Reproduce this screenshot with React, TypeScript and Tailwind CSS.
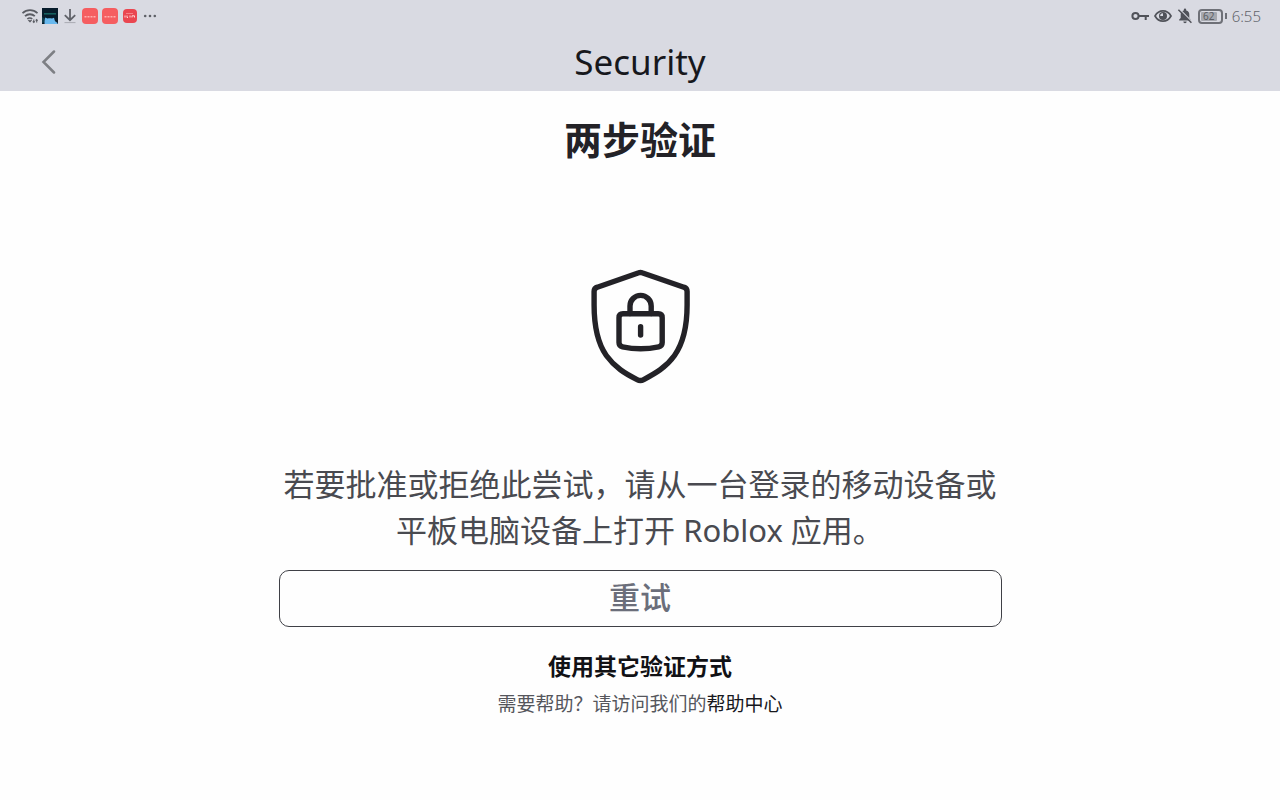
const fontStack = "font-['Noto_Sans','Noto_Sans_CJK_SC',sans-serif]";

function WifiIcon() {
  return (
    <svg className="h-4 w-4" viewBox="0 0 16 16" fill="none" stroke="#5a5c63" aria-hidden="true">
      <path d="M0.5 5.2C4.7 1.2 11.3 1.2 15.5 5.2" strokeWidth="1.8" />
      <path d="M3 8.2C5.8 5.6 10 5.6 12.8 8.2" strokeWidth="1.8" />
      <path d="M5.3 11C6.8 9.6 8.9 9.6 10.2 11" strokeWidth="1.6" />
      <path d="M6.3 12.4 8 14.2 9.6 12.4Z" fill="#5a5c63" strokeWidth="0.8" />
      <path d="M11.8 11.5v3M10.8 13.3l1 1.2 1-1.2M14.7 14.5v-3M13.7 12.7l1-1.2 1 1.2" strokeWidth="1.1" />
    </svg>
  );
}

function PictureIcon() {
  return (
    <svg className="h-4 w-4" viewBox="0 0 16 16" aria-hidden="true">
      <rect width="16" height="16" fill="#071c2b" />
      <path d="M2 5h12v1.6H2z" fill="#15605f" />
      <path d="M2.6 16C2.2 12.6 2.6 10.6 3.4 9.6L5.4 10.6C7 10 8.6 10 10 10.6L12 9.8C12.6 11.4 12.6 12.6 13.4 13.6L15.5 15V16Z" fill="#69b9ee" />
      <path d="M0 9 2.6 10.4 2 14.5 0 15Z" fill="#103d4b" />
    </svg>
  );
}

function DownloadIcon() {
  return (
    <svg className="h-4 w-4" viewBox="0 0 16 16" fill="none" stroke="#606269" aria-hidden="true">
      <path d="M8 1v11M2.8 7.2 8 12.2l5.2-5" strokeWidth="1.8" />
      <path d="M2.5 14.6h11" stroke="#a9abb2" strokeWidth="1" />
    </svg>
  );
}

function RedAppIcon({ small = false }: { small?: boolean }) {
  return (
    <svg className="h-4 w-4" viewBox="0 0 16 16" aria-hidden="true">
      {small ? (
        <>
          <rect x="1" y="1" width="14" height="14" rx="4" fill="#ea4650" />
          <path d="M3 9.5V7.5M5 7.5v2h1M8 9.5v-2M10 9.5V7.8h2.5v1.7" fill="none" stroke="#ffd5d5" strokeWidth="1" />
          <path d="M4 5.5h7" stroke="#f58288" strokeWidth="1" />
        </>
      ) : (
        <>
          <rect width="16" height="16" rx="4" fill="#f55d60" />
          <path d="M2.5 8.7h2M5.5 8.7h2M8.5 8.7h2M11.5 8.7h2" stroke="#ffb0ae" strokeWidth="1.4" />
        </>
      )}
    </svg>
  );
}

function MoreIcon() {
  return (
    <svg className="h-4 w-4" viewBox="0 0 16 16" fill="#5e6067" aria-hidden="true">
      <circle cx="3.2" cy="8" r="1.3" />
      <circle cx="8" cy="8" r="1.3" />
      <circle cx="12.8" cy="8" r="1.3" />
    </svg>
  );
}

function KeyIcon() {
  return (
    <svg className="h-4 w-[18px]" viewBox="0 0 18 16" fill="none" stroke="#505259" strokeWidth="2" aria-hidden="true">
      <circle cx="4.5" cy="8" r="3.1" />
      <path d="M7.6 8H18M14.7 8v4" />
    </svg>
  );
}

function EyeIcon() {
  return (
    <svg className="h-4 w-[18px]" viewBox="0 0 18 16" aria-hidden="true">
      <path d="M1 8C4.8 1.2 13.2 1.2 17 8 13.2 14.8 4.8 14.8 1 8Z" fill="none" stroke="#505259" strokeWidth="1.7" />
      <circle cx="9" cy="8" r="4" fill="#505259" />
      <path d="M9 5.2V8H6.2A2.8 2.8 0 0 1 9 5.2Z" fill="#d9dae2" />
    </svg>
  );
}

function MutedBellIcon() {
  return (
    <svg className="h-4 w-4" viewBox="0 0 16 16" aria-hidden="true">
      <path d="M2.2 12.6v-1L3.7 10V6.8A4.3 4.3 0 0 1 6.8 2.5V1.8a1.2 1.2 0 0 1 2.4 0v.7A4.3 4.3 0 0 1 12.3 6.8V10l1.5 1.6v1Z" fill="#505259" />
      <path d="M6.3 13.6h3.4a1.7 1.7 0 0 1-3.4 0Z" fill="#505259" />
      <path d="M2.6 1.2 15 13.6" stroke="#d9dae2" strokeWidth="1.2" />
      <path d="M1.4 1.8 14.4 14.8" stroke="#505259" strokeWidth="1.5" />
    </svg>
  );
}

function Battery() {
  return (
    <div className="flex items-center gap-0.5" role="img" aria-label="Battery">
      <div className="flex h-[15px] w-[25px] rounded-[4px] border-2 border-[#6e7077] p-px">
        <div className="flex w-4 items-center justify-center rounded-[1px] bg-[#a6a8af] text-[10px] leading-none text-[#5a5c63]">
          62
        </div>
      </div>
      <div className="h-1.5 w-0.5 bg-[#6e7077]" />
    </div>
  );
}

function ShieldLockIcon() {
  return (
    <svg className="h-[116px] w-[100px]" viewBox="0 0 100 116" fill="none" stroke="#232227" strokeLinejoin="round" strokeLinecap="round" aria-hidden="true">
      <path
        d="M48.8 3.8Q50.4 3.1 52 3.8L93.9 18.2Q97.1 19.2 97.1 22.5V36C97.1 56 94 73 84.5 86.5C76 98.5 65 104.5 53.7 110.6Q50.4 112.4 47.1 110.6C35 104.5 25 98.5 16.3 86.5C6.9 73 4.1 56 4.1 36V22.5Q4.1 19.2 7.3 18.2Z"
        strokeWidth="5.4"
      />
      <path d="M40 44.5V37a10.6 10.6 0 0 1 21.2 0v7.5" strokeWidth="5.4" />
      <path d="M33 44.8H68.3Q72.2 44.8 72.2 48.7V73.5Q72.2 77 68.7 77.8Q50.6 81.8 32.5 77.8Q29 77 29 73.5V48.7Q29 44.8 33 44.8Z" strokeWidth="5.4" />
      <path d="M50.6 57.7V66" strokeWidth="5.4" />
    </svg>
  );
}

function StatusBar() {
  return (
    <div className="flex h-8 items-center justify-between pr-[19px] pl-[22px]">
      <div className="flex items-center gap-1">
        <WifiIcon />
        <PictureIcon />
        <DownloadIcon />
        <RedAppIcon />
        <RedAppIcon />
        <RedAppIcon small />
        <MoreIcon />
      </div>
      <div className="flex items-center gap-[5px]">
        <KeyIcon />
        <EyeIcon />
        <MutedBellIcon />
        <Battery />
        <span className="text-[15px] leading-4 font-light text-[#62646b]">6:55</span>
      </div>
    </div>
  );
}

export default function App() {
  return (
    <div className={`min-h-screen bg-[#fefefe] ${fontStack}`} lang="zh-CN">
      <header className="bg-[#d9dae2]">
        <StatusBar />
        <div className="grid h-[59px] grid-cols-[1fr_auto_1fr] items-center px-[31px]">
          <button type="button" aria-label="返回" className="flex h-9 w-9 items-center justify-center">
            <svg className="h-6 w-4" viewBox="0 0 16 24" fill="none" stroke="#7d7f84" strokeWidth="2.5" strokeLinecap="round" aria-hidden="true">
              <path d="M13 1.5 2.5 12 13 22.5" />
            </svg>
          </button>
          <h1 className="text-[35px] leading-[59px] text-[#17181d]">Security</h1>
        </div>
      </header>

      <main className="mx-auto flex w-full max-w-[723px] flex-col items-center pt-6 text-center">
        <h2 className="text-[38px] leading-[48px] font-bold text-[#232227]">两步验证</h2>
        <div className="pt-[106px] pb-[76px]">
          <ShieldLockIcon />
        </div>
        <p className="text-[31px] leading-[46px] text-[#494a50]">
          若要批准或拒绝此尝试，请从一台登录的移动设备或平板电脑设备上打开 Roblox 应用。
        </p>
        <button
          type="button"
          className="mt-[17px] flex h-[57px] w-full items-center justify-center rounded-[10px] border border-[#3f4046] pb-1 text-[31px] leading-[46px] font-medium text-[#6b6e7a]"
        >
          重试
        </button>
        <a href="#methods" className="mt-6 text-[23px] leading-[30px] font-bold text-[#111115]">
          使用其它验证方式
        </a>
        <p className="mt-2 text-[19px] leading-[30px] text-[#55565c]">
          需要帮助？请访问我们的
          <a href="#help" className="text-[#17181d]">帮助中心</a>
        </p>
      </main>
    </div>
  );
}
